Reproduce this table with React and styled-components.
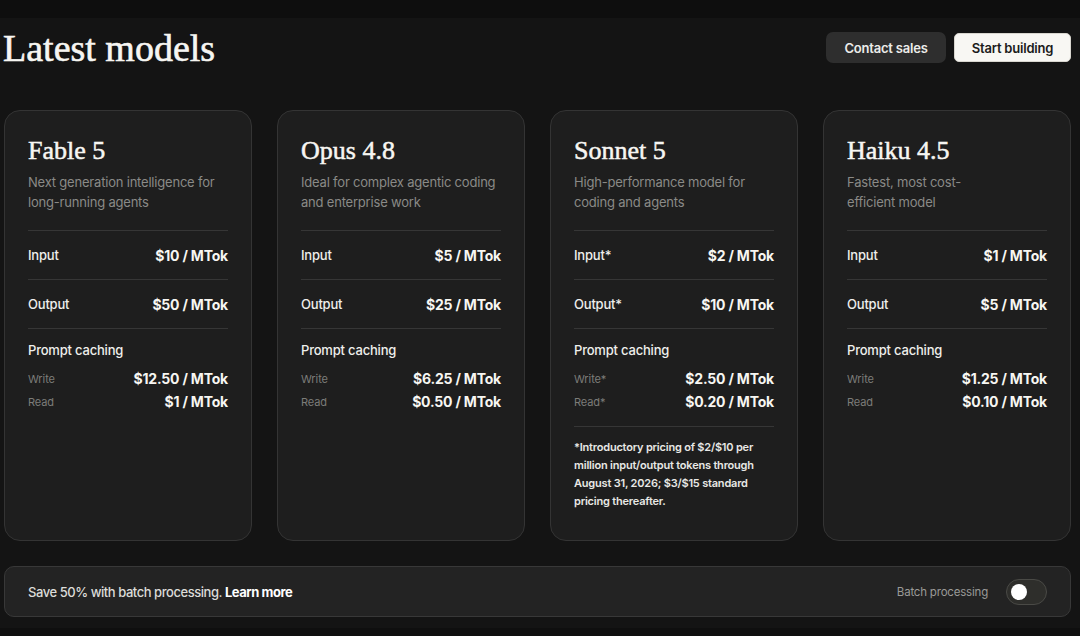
import React, { useState } from "react";
import styled, { createGlobalStyle } from "styled-components";

const Global = createGlobalStyle`
  html, body { margin: 0; padding: 0; background: #141414; }
  body { font-family: Inter, "Noto Sans", sans-serif; color: #f2f2f0; -webkit-font-smoothing: antialiased; }
  * { box-sizing: border-box; }
`;

const Page = styled.div`
  width: 1080px;
  height: 636px;
  background: #141414;
  display: flex;
  flex-direction: column;
  overflow: hidden;
`;

const TopStrip = styled.div`
  height: 18px;
  background: #0e0e0e;
  flex: none;
`;

const BottomStrip = styled.div`
  height: 8px;
  background: #0f0f0f;
  margin-top: auto;
  flex: none;
`;

const Content = styled.div`
  padding: 0 9px 0 4px;
  display: flex;
  flex-direction: column;
`;

const Header = styled.div`
  height: 92px;
  display: flex;
  align-items: flex-start;
  justify-content: space-between;
`;

const Title = styled.h1`
  margin: 10px 0 0 -1px;
  font-family: "Liberation Serif", serif;
  font-weight: 400;
  font-size: 38px;
  line-height: 40px;
  letter-spacing: 0;
  -webkit-text-stroke: 0.6px #f7f6f2;
  color: #f7f6f2;
`;

const Actions = styled.div`
  display: flex;
  align-items: center;
  gap: 8px;
  margin-top: 14px;
`;

const Button = styled.button`
  font-family: Inter, sans-serif;
  font-size: 13px;
  font-weight: 600;
  letter-spacing: -0.2px;
  border-radius: ${(p) => (p.$primary ? "5px" : "7px")};
  height: ${(p) => (p.$primary ? "29px" : "31px")};
  width: ${(p) => (p.$primary ? "117px" : "120px")};
  border: ${(p) => (p.$primary ? "1px solid #d8d6cf" : "none")};
  background: ${(p) => (p.$primary ? "#f8f7f3" : "#2e2e2e")};
  color: ${(p) => (p.$primary ? "#1b1b1b" : "#ececea")};
  cursor: pointer;
  padding: 0;
`;

const Grid = styled.div`
  display: grid;
  grid-template-columns: repeat(4, 248px);
  column-gap: 25px;
`;

const Card = styled.div`
  height: 431px;
  background: #1e1e1e;
  border: 1px solid #343434;
  border-radius: 16px;
  padding: 24px 23px 0 23px;
  display: flex;
  flex-direction: column;
`;

const CardTitle = styled.h2`
  margin: 0;
  font-family: "Liberation Serif", serif;
  font-weight: 400;
  font-size: 26px;
  line-height: 32px;
  -webkit-text-stroke: 0.5px #f7f6f2;
  color: #f7f6f2;
`;

const Desc = styled.p`
  margin: 5px 0 0;
  font-size: 13px;
  line-height: 20px;
  color: #8a8a87;
  letter-spacing: -0.2px;
  height: 40px;
`;

const Divider = styled.div`
  height: 1px;
  background: #363636;
  margin-top: ${(p) => p.$mt || 0}px;
`;

const Row = styled.div`
  height: 48px;
  display: flex;
  align-items: center;
  justify-content: space-between;
`;

const Label = styled.span`
  font-size: 13px;
  font-weight: 500;
  color: #efefec;
  letter-spacing: -0.2px;
`;

const Price = styled.span`
  font-size: 14px;
  font-weight: 700;
  color: #f7f6f2;
  letter-spacing: -0.2px;
`;

const CacheBlock = styled.div`
  padding-top: 12px;
  display: flex;
  flex-direction: column;
`;

const CacheTitle = styled.div`
  font-size: 13px;
  font-weight: 500;
  color: #efefec;
  line-height: 18px;
  letter-spacing: -0.2px;
  margin-bottom: 8px;
`;

const SubRow = styled.div`
  height: 23px;
  display: flex;
  align-items: center;
  justify-content: space-between;
`;

const SubLabel = styled.span`
  font-size: 11px;
  color: #7c7c79;
  letter-spacing: -0.1px;
`;

const Note = styled.p`
  margin: 11px 0 0;
  font-size: 11px;
  line-height: 18px;
  font-weight: 600;
  color: #e8e8e5;
  letter-spacing: -0.2px;
`;

const BatchBar = styled.div`
  margin-top: 25px;
  height: 51px;
  background: #232323;
  border: 1px solid #383838;
  border-radius: 10px;
  display: flex;
  align-items: center;
  justify-content: space-between;
  padding: 0 23px 0 23px;
`;

const BatchText = styled.span`
  font-size: 13px;
  color: #dcdcd9;
  letter-spacing: -0.45px;
  font-weight: 500;
`;

const LearnMore = styled.a`
  color: #ffffff;
  font-weight: 700;
  text-decoration: none;
`;

const ToggleWrap = styled.label`
  display: flex;
  align-items: center;
  gap: 18px;
  font-size: 11.5px;
  color: #9a9a97;
  letter-spacing: -0.2px;
  cursor: pointer;
`;

const Track = styled.span`
  width: 41px;
  height: 26px;
  border-radius: 13px;
  background: ${(p) => (p.$on ? "#d97757" : "#2e2e2b")};
  border: 1px solid #4a4a46;
  display: flex;
  align-items: center;
  padding: 0 4px;
  justify-content: ${(p) => (p.$on ? "flex-end" : "flex-start")};
`;

const Knob = styled.span`
  width: 16px;
  height: 16px;
  border-radius: 50%;
  background: #ffffff;
`;

const models = [
  {
    name: "Fable 5",
    desc: ["Next generation intelligence for", "long-running agents"],
    input: "$10 / MTok",
    output: "$50 / MTok",
    write: "$12.50 / MTok",
    read: "$1 / MTok",
  },
  {
    name: "Opus 4.8",
    desc: ["Ideal for complex agentic coding", "and enterprise work"],
    input: "$5 / MTok",
    output: "$25 / MTok",
    write: "$6.25 / MTok",
    read: "$0.50 / MTok",
  },
  {
    name: "Sonnet 5",
    desc: ["High-performance model for", "coding and agents"],
    input: "$2 / MTok",
    output: "$10 / MTok",
    write: "$2.50 / MTok",
    read: "$0.20 / MTok",
    star: true,
    note:
      "*Introductory pricing of $2/$10 per million input/output tokens through August 31, 2026; $3/$15 standard pricing thereafter.",
  },
  {
    name: "Haiku 4.5",
    desc: ["Fastest, most cost-", "efficient model"],
    input: "$1 / MTok",
    output: "$5 / MTok",
    write: "$1.25 / MTok",
    read: "$0.10 / MTok",
  },
];

function ModelCard({ m }) {
  const s = m.star ? "*" : "";
  return (
    <Card>
      <CardTitle>{m.name}</CardTitle>
      <Desc>
        {m.desc[0]}
        <br />
        {m.desc[1]}
      </Desc>
      <Divider $mt={18} />
      <Row>
        <Label>Input{s}</Label>
        <Price>{m.input}</Price>
      </Row>
      <Divider />
      <Row>
        <Label>Output{s}</Label>
        <Price>{m.output}</Price>
      </Row>
      <Divider />
      <CacheBlock>
        <CacheTitle>Prompt caching</CacheTitle>
        <SubRow>
          <SubLabel>Write{s}</SubLabel>
          <Price>{m.write}</Price>
        </SubRow>
        <SubRow>
          <SubLabel>Read{s}</SubLabel>
          <Price>{m.read}</Price>
        </SubRow>
      </CacheBlock>
      {m.note && (
        <>
          <Divider $mt={13} />
          <Note>{m.note}</Note>
        </>
      )}
    </Card>
  );
}

export default function App() {
  const [on, setOn] = useState(false);
  return (
    <Page>
      <Global />
      <TopStrip />
      <Content>
        <Header>
          <Title>Latest models</Title>
          <Actions>
            <Button>Contact sales</Button>
            <Button $primary>Start building</Button>
          </Actions>
        </Header>
        <Grid>
          {models.map((m) => (
            <ModelCard key={m.name} m={m} />
          ))}
        </Grid>
        <BatchBar>
          <BatchText>
            Save 50% with batch processing. <LearnMore href="#">Learn more</LearnMore>
          </BatchText>
          <ToggleWrap onClick={() => setOn(!on)}>
            Batch processing
            <Track $on={on}>
              <Knob />
            </Track>
          </ToggleWrap>
        </BatchBar>
      </Content>
      <BottomStrip />
    </Page>
  );
}
